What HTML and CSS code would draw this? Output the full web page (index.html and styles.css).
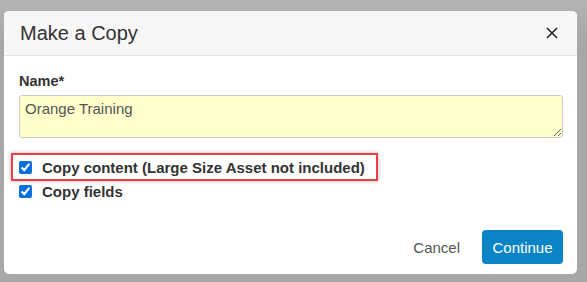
FILE: index.html
```html
<!DOCTYPE html>
<html lang="en">
<head>
  <meta charset="UTF-8" />
  <title>Make a Copy</title>
  <link rel="stylesheet" href="styles.css">
</head>
<body>

  <div class="dialog">
    <div class="dialog-header">
      <h2>Make a Copy</h2>
      <button class="close" type="button" aria-label="Close">
        <svg width="12" height="12" viewBox="0 0 12 12"><path d="M1 1L11 11M11 1L1 11" stroke="#222" stroke-width="1.6" fill="none"/></svg>
      </button>
    </div>

    <form class="dialog-body">
      <label for="name" class="field-label">Name*</label>
      <textarea id="name" name="name">Orange Training</textarea>

      <div class="check-row highlight">
        <input type="checkbox" id="copyContent" checked>
        <label for="copyContent">Copy content (Large Size Asset not included)</label>
      </div>
      <div class="check-row">
        <input type="checkbox" id="copyFields" checked>
        <label for="copyFields">Copy fields</label>
      </div>
    </form>

    <div class="dialog-footer">
      <button type="button" class="btn-link">Cancel</button>
      <button type="button" class="btn-primary">Continue</button>
    </div>
  </div>

</body>
</html>
```

FILE: styles.css
```css
body {
  margin: 0;
  padding: 11px 0 0 4px;
  background: linear-gradient(#b4b4b4, #a8a8a8 40px);
  font-family: Arial, "Liberation Sans", sans-serif;
  color: #333;
  height: 271px;
}
.dialog {
  width: 573px;
  height: 263px;
  background-color: #fff;
  border-radius: 5px;
  overflow: hidden;
  display: flex;
  flex-direction: column;
}
.dialog-header {
  height: 44px;
  background-color: #f7f7f7;
  border-bottom: 1px solid #e5e5e5;
  display: flex;
  align-items: center;
  justify-content: space-between;
  padding: 0 19px 0 16px;
}
.dialog-header h2 {
  margin: 0;
  font-size: 20px;
  font-weight: normal;
  color: #333;
}
.close {
  background: none;
  border: none;
  padding: 0;
  width: 12px;
  height: 12px;
  display: flex;
  cursor: pointer;
}
.dialog-body {
  padding: 15px 14px 0 15px;
}
.field-label {
  display: block;
  font-size: 14.5px;
  font-weight: bold;
  line-height: 20px;
  margin-bottom: 4px;
}
textarea {
  display: block;
  box-sizing: border-box;
  width: 100%;
  height: 43px;
  margin: 0;
  padding: 4px 5px;
  background-color: #ffffcc;
  border: 1px solid #ccc;
  border-radius: 3px;
  font-family: Arial, "Liberation Sans", sans-serif;
  font-size: 15px;
  color: #555;
}
.check-row {
  display: flex;
  align-items: center;
  height: 20px;
  font-size: 15px;
  font-weight: bold;
}
.check-row input {
  width: 13px;
  height: 13px;
  margin: 0 10px 0 0;
  accent-color: #0b6fe0;
}
.highlight {
  margin: 15px 0 0 -8px;
  width: 357px;
  height: 24px;
  padding-left: 6px;
  border: 2px solid #ef3f45;
  box-shadow: 0 0 4px rgba(0,0,0,0.3);
}
.dialog-footer {
  margin-top: auto;
  display: flex;
  justify-content: flex-end;
  align-items: center;
  gap: 10px;
  padding: 0 14px 10px 0;
}
.btn-link {
  background: none;
  border: none;
  padding: 0 12px;
  font-family: Arial, "Liberation Sans", sans-serif;
  font-size: 15px;
  color: #555;
  cursor: pointer;
}
.btn-primary {
  width: 81px;
  height: 34px;
  background-color: #0a84c6;
  color: #fff;
  border: none;
  border-radius: 4px;
  font-family: Arial, "Liberation Sans", sans-serif;
  font-size: 15px;
  cursor: pointer;
}
```
